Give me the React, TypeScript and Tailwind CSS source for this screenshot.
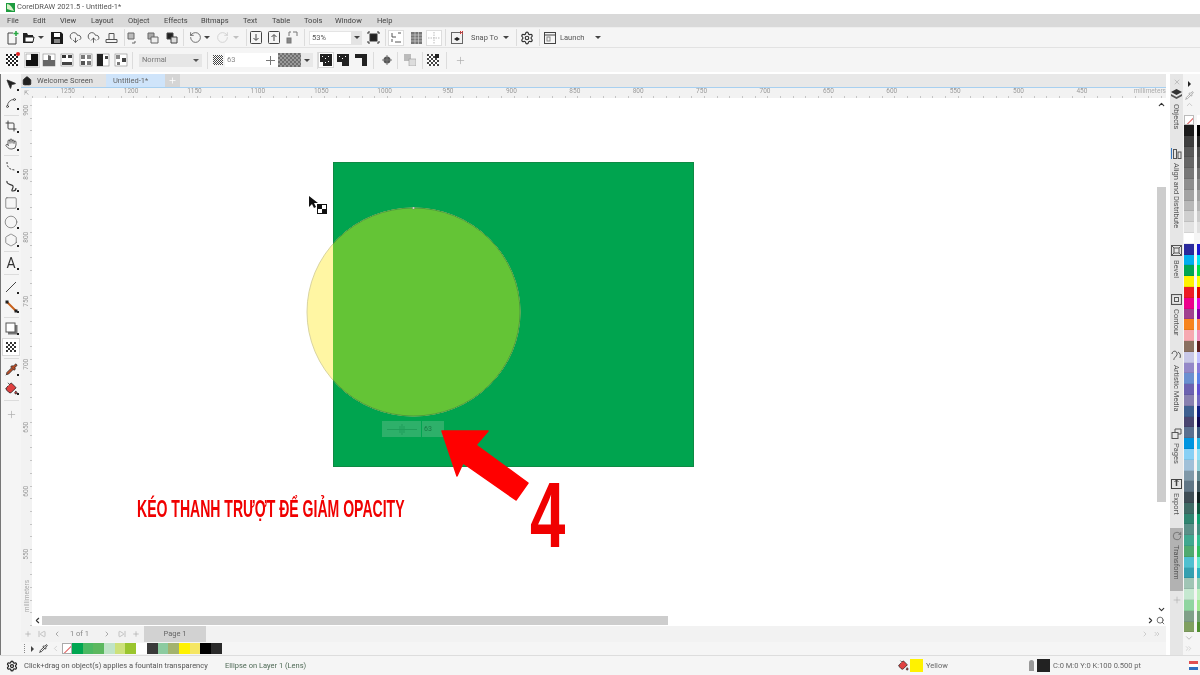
import {
  ChevronDown,
  ChevronLeft,
  ChevronRight,
  ChevronUp,
  ChevronsRight,
  CloudDownload,
  CloudUpload,
  Circle,
  Crop,
  Hand,
  Hexagon,
  House,
  MousePointer2,
  PaintBucket,
  Pipette,
  Plus,
  RotateCcw,
  RotateCw,
  Search,
  Settings,
  SkipBack,
  SkipForward,
  Spline,
  Square,
  X,
} from "lucide-react";
import type { ReactNode } from "react";

const menu = [
  { label: "File", cls: "w-[26px]" },
  { label: "Edit", cls: "w-[27px]" },
  { label: "View", cls: "w-[31px]" },
  { label: "Layout", cls: "w-[37px]" },
  { label: "Object", cls: "w-[36px]" },
  { label: "Effects", cls: "w-[37px]" },
  { label: "Bitmaps", cls: "w-[42px]" },
  { label: "Text", cls: "w-[29px]" },
  { label: "Table", cls: "w-[32px]" },
  { label: "Tools", cls: "w-[31px]" },
  { label: "Window", cls: "w-[42px]" },
  { label: "Help", cls: "w-[30px]" },
];

const hRuler = [1250, 1200, 1150, 1100, 1050, 1000, 950, 900, 850, 800, 750, 700, 650, 600, 550, 500, 450];
const vRuler = [900, 850, 800, 750, 700, 650, 600, 550];

const sideA = [
  "#1c1c1c", "#3f3f3f", "#595959", "#666666", "#777777", "#8e8e8e", "#a3a3a3", "#b8b8b8", "#cfcfcf", "#e3e3e3", "#ffffff",
  "#2a2a9c", "#00aeef", "#00a651", "#fff200", "#ed1c24", "#ec008c", "#a0408f", "#f7841e", "#f7a8b0", "#8a7060", "#c8c8e8",
  "#9488c8", "#6a8fd0", "#6c62b0", "#8880b0", "#3f6090", "#4a4570", "#5a7090", "#0095e0", "#88d0f5", "#a0c0d8", "#7f98a8",
  "#607585", "#3f4d55", "#3f6b65", "#2f8570", "#5a9088", "#40a88f", "#4faa6f", "#4fc0d0", "#35a0b0", "#a0c5b5", "#c5e8d0",
  "#90d5a0", "#80a088", "#80a060",
];
const sideB = [
  "#000000", "#262626", "#4a4a4a", "#555555", "#707070", "#888888", "#a0a0a0", "#b5b5b5", "#cccccc", "#e0e0e0", "#f5f5f5",
  "#1a1ad0", "#00e8f0", "#00e040", "#ffff00", "#e00000", "#e000e0", "#8000a0", "#ff8040", "#f090c0", "#602020", "#c0c0ff",
  "#8a7ad8", "#5a80e8", "#6050d0", "#7068c0", "#102080", "#100850", "#3a5a80", "#20b8e8", "#90e0f8", "#90d0d8", "#608890",
  "#405860", "#102020", "#105840", "#10a070", "#409080", "#30c090", "#30c060", "#60e8d0", "#30b0c0", "#90d0b0", "#c0f0c0",
  "#a0e890", "#70a070", "#509030",
];
const strip = ["#00a651", "#4cb963", "#5cb85f", "#c0e4c8", "#cde17a", "#9ac52e", "#ffffff", "#3a3a3a", "#8ccba0", "#a3b36e", "#fff200", "#f5e663", "#000000", "#2a2a2a"];

const dockerIcons: Record<string, ReactNode> = {
  Objects: (
    <svg width="11" height="11" viewBox="0 0 11 11">
      <path d="M5.500 0 11 3 5.500 6 0 3z" fill="#333" />
      <path d="M0 5l5.500 3L11 5v2L5.500 10 0 7z" fill="#555" />
    </svg>
  ),
  "Align and Distribute": (
    <svg width="11" height="11" viewBox="0 0 11 11" fill="none" stroke="#555">
      <path d="M0.500 0v11" stroke="#3a7ac0" />
      <rect x="2.500" y="1.500" width="3" height="9" />
      <rect x="7" y="4" width="3" height="6.500" />
    </svg>
  ),
  Bevel: (
    <svg width="11" height="11" viewBox="0 0 11 11" fill="none" stroke="#555">
      <rect x="0.500" y="0.500" width="10" height="10" />
      <rect x="3" y="3" width="5" height="5" />
      <path d="M0.500 0.500 3 3M10.500 0.500 8 3M0.500 10.500 3 8M10.500 10.500 8 8" />
    </svg>
  ),
  Contour: (
    <svg width="11" height="11" viewBox="0 0 11 11" fill="none" stroke="#555">
      <rect x="0.500" y="0.500" width="10" height="10" strokeWidth="1.200" />
      <rect x="3.500" y="3.500" width="4" height="4" />
    </svg>
  ),
  "Artistic Media": (
    <svg width="11" height="11" viewBox="0 0 11 11" fill="none" stroke="#555">
      <path d="M1 4c0-3 4-4 5-1s-4 5-3 7M7 2c2 1 3 3 2 6" />
    </svg>
  ),
  Pages: (
    <svg width="11" height="11" viewBox="0 0 11 11" fill="none" stroke="#555">
      <path d="M4 4V1h6v5H7" />
      <rect x="1" y="4.500" width="6" height="6" />
    </svg>
  ),
  Export: (
    <svg width="11" height="11" viewBox="0 0 11 11" fill="none" stroke="#444">
      <rect x="0.500" y="1.500" width="10" height="9" />
      <path d="M5.500 8V2" strokeWidth="1.500" />
      <path d="M3.500 4 5.500 2 7.500 4" />
    </svg>
  ),
};

const dockers = [
  { label: "Objects", cls: "h-[59px]" },
  { label: "Align and Distribute", cls: "h-[97px]" },
  { label: "Bevel", cls: "h-[49px]" },
  { label: "Contour", cls: "h-[56px]" },
  { label: "Artistic Media", cls: "h-[78px]" },
  { label: "Pages", cls: "h-[50px]" },
  { label: "Export", cls: "h-[50px]" },
];

function Sep({ cls = "" }: { cls?: string }) {
  return <div className={`w-px h-[17px] bg-[#dcdcdc] shrink-0 ${cls}`} />;
}

function HSep({ cls = "" }: { cls?: string }) {
  return <div className={`h-px w-[15px] bg-[#dcdcdc] mx-auto shrink-0 ${cls}`} />;
}

function Btn({ cls = "", children }: { cls?: string; children: ReactNode }) {
  return <div className={`w-4 h-4 flex items-center justify-center shrink-0 text-[#333] ${cls}`}>{children}</div>;
}

// toolbox buttons are taller and carry the small flyout mark in their corner
function Tool({ cls = "", flyout = true, children }: { cls?: string; flyout?: boolean; children: ReactNode }) {
  return (
    <div className={`relative w-[18px] h-[18px] ml-px flex items-center justify-center shrink-0 text-[#333] ${cls}`}>
      {children}
      {flyout && <div className="absolute right-[1px] bottom-[2px] w-[2px] h-[2px] bg-[#222]" />}
    </div>
  );
}

function Caret({ cls = "" }: { cls?: string }) {
  return (
    <div className={`w-2 flex justify-center shrink-0 ${cls}`}>
      <div className="w-0 h-0 border-x-[3px] border-x-transparent border-t-[3px] border-t-[#444]" />
    </div>
  );
}

function Checker({ size = 12, a = "#222", b = "#fff", cell = 2 }: { size?: number; a?: string; b?: string; cell?: number }) {
  const cells = [];
  const n = Math.floor(size / cell);
  for (let y = 0; y < n; y++) {
    for (let x = 0; x < n; x++) {
      if ((x + y) % 2 === 0) cells.push(<rect key={`${x}-${y}`} x={x * cell} y={y * cell} width={cell} height={cell} fill={a} />);
    }
  }
  return (
    <svg width={size} height={size} viewBox={`0 0 ${size} ${size}`}>
      <rect width={size} height={size} fill={b} />
      {cells}
    </svg>
  );
}

// the transparency type buttons share one shape: dark marks on a white square
function TypeIcon({ kind }: { kind: number }) {
  return (
    <svg width="14" height="14" viewBox="0 0 14 14">
      <rect x="1" y="1" width="12" height="12" fill="#fff" stroke="#888" strokeWidth="0.6" />
      {kind === 0 && <path d="M1 13V7h5V1h7v12z" fill="#111" />}
      {kind === 1 && <path d="M1 13V7h5V2l3 1v4h4v6z" fill="#666" />}
      {kind === 2 && (
        <>
          <rect x="2" y="2" width="4" height="3" fill="#333" />
          <rect x="8" y="2" width="4" height="3" fill="#444" />
          <rect x="2" y="9" width="10" height="3" fill="#444" />
        </>
      )}
      {kind === 3 && (
        <>
          <rect x="2" y="2" width="4" height="4" fill="#777" />
          <rect x="8" y="2" width="4" height="4" fill="#888" />
          <rect x="2" y="8" width="4" height="4" fill="#555" />
          <rect x="8" y="8" width="4" height="4" fill="#777" />
        </>
      )}
      {kind === 4 && (
        <>
          <rect x="1" y="1" width="6" height="12" fill="#222" />
          <rect x="9" y="3" width="3" height="3" fill="#444" />
        </>
      )}
      {kind === 5 && (
        <>
          <rect x="2" y="2" width="4" height="4" fill="#888" />
          <rect x="8" y="5" width="4" height="4" fill="#444" />
          <rect x="3" y="9" width="3" height="3" fill="#777" />
        </>
      )}
    </svg>
  );
}

function TopToolbar() {
  return (
    <div className="h-5 flex items-center pl-1 bg-[#f5f5f5] border-b border-[#e2e2e2] text-[#444] shrink-0">
      <Btn>
        <svg width="13" height="14" viewBox="0 0 13 14" fill="none" stroke="#444">
          <path d="M7 2H2v11h8V6" />
          <path d="M10 0v5M7.500 2.500h5" stroke="#2aa845" strokeWidth="1.600" />
        </svg>
      </Btn>
      <Btn>
        <svg width="13" height="12" viewBox="0 0 13 12">
          <path d="M1 1h4l1 2h5v8H1z" fill="#222" />
          <path d="M3 5h9l-1 5H3z" fill="#fff" stroke="#222" />
        </svg>
      </Btn>
      <Caret cls="ml-px" />
      <Btn cls="ml-1">
        <svg width="12" height="12" viewBox="0 0 12 12">
          <path d="M0 0h10l2 2v10H0z" fill="#1a1a1a" />
          <rect x="3" y="1" width="6" height="4" fill="#fff" />
          <rect x="3" y="7" width="6" height="4" fill="#888" />
        </svg>
      </Btn>
      <Btn cls="ml-0.5"><CloudDownload size={13} strokeWidth={1.400} /></Btn>
      <Btn cls="ml-0.5"><CloudUpload size={13} strokeWidth={1.400} /></Btn>
      <Btn cls="ml-0.5">
        <svg width="13" height="13" viewBox="0 0 13 13" fill="none" stroke="#555">
          <path d="M4 8V2.500h5V8M1 8.500h11v3H1z" />
        </svg>
      </Btn>
      <Sep cls="ml-[5px]" />
      <Btn>
        <svg width="12" height="12" viewBox="0 0 12 12" fill="none" stroke="#666">
          <path d="M1 1h6v6H1z" fill="#bbb" />
          <path d="M8 9v2H5" />
        </svg>
      </Btn>
      <Btn cls="ml-1">
        <svg width="12" height="12" viewBox="0 0 12 12" fill="none" stroke="#666">
          <path d="M1 1h6v6H1z" fill="#aaa" />
          <path d="M4 5h7v6H4z" fill="#eee" />
        </svg>
      </Btn>
      <Btn cls="ml-[3px]">
        <svg width="12" height="12" viewBox="0 0 12 12" stroke="#444">
          <path d="M1 1h6v6H1z" fill="#222" />
          <path d="M5 5h6v6H5z" fill="#ddd" />
        </svg>
      </Btn>
      <Sep cls="ml-[3px]" />
      <Btn cls="ml-[3px] text-[#555]"><RotateCcw size={13} strokeWidth={1.500} /></Btn>
      <Caret />
      <Btn cls="ml-[3px] text-[#ccc]"><RotateCw size={13} strokeWidth={1.500} /></Btn>
      <Caret cls="ml-0.5 opacity-30" />
      <Sep cls="ml-1.5" />
      <Btn cls="ml-px">
        <svg width="12" height="13" viewBox="0 0 12 13" fill="none" stroke="#444">
          <rect x="0.500" y="0.500" width="11" height="12" rx="1" />
          <path d="M6 3v6M3.500 7 6 9.500 8.500 7" />
        </svg>
      </Btn>
      <Btn cls="ml-0.5">
        <svg width="12" height="13" viewBox="0 0 12 13" fill="none" stroke="#444">
          <rect x="0.500" y="0.500" width="11" height="12" rx="1" />
          <path d="M6 10V4M3.500 6 6 3.500 8.500 6" />
        </svg>
      </Btn>
      <Btn cls="ml-0.5">
        <svg width="12" height="13" viewBox="0 0 12 13" fill="none" stroke="#777">
          <rect x="1" y="7" width="4" height="5" fill="#888" />
          <path d="M7 1h4v4M3 5V1h2" />
        </svg>
      </Btn>
      <Sep cls="ml-1" />
      <div className="ml-1 w-[43px] h-[14px] bg-white border border-[#e4e4e4] text-[7.5px] leading-[12px] pl-[2px] text-[#555] shrink-0">53%</div>
      <div className="w-2.5 h-[14px] bg-[#e4e4e4] flex items-center justify-center shrink-0">
        <div className="w-0 h-0 border-x-[3px] border-x-transparent border-t-[3px] border-t-[#444]" />
      </div>
      <Btn cls="ml-[3px]">
        <svg width="13" height="13" viewBox="0 0 13 13" fill="none" stroke="#333">
          <rect x="3" y="3" width="7" height="7" fill="#222" />
          <path d="M1 3V1h2M10 1h2v2M12 10v2h-2M3 12H1v-2" />
        </svg>
      </Btn>
      <Sep cls="ml-1" />
      <Btn cls="ml-0.5 border border-[#dddddd] bg-white">
        <svg width="11" height="11" viewBox="0 0 11 11" fill="none" stroke="#555">
          <path d="M1 1v4h4M10 1H7M1 10V7M4 10h6" />
        </svg>
      </Btn>
      <Btn cls="ml-1">
        <svg width="11" height="12" viewBox="0 0 11 12">
          <rect width="11" height="12" fill="#777" />
          <path d="M0 3h11M0 6h11M0 9h11M4 0v12M7.500 0v12" stroke="#ddd" strokeWidth="0.600" />
        </svg>
      </Btn>
      <Btn cls="ml-0.5 border border-[#dddddd] bg-white">
        <svg width="12" height="12" viewBox="0 0 12 12" fill="none" stroke="#bbb" strokeDasharray="1.500 1">
          <path d="M6 0v12M0 6h12" />
        </svg>
      </Btn>
      <Sep cls="ml-[3px]" />
      <Btn cls="ml-[3px]">
        <svg width="13" height="13" viewBox="0 0 13 13">
          <rect x="0.500" y="1.500" width="11" height="11" fill="#f2f2f2" stroke="#666" />
          <path d="M3 8l3-2 3 2-3 2z" fill="#222" />
          <path d="M9 0l3 3M12 0 9 3" stroke="#e03030" />
        </svg>
      </Btn>
      <span className="ml-1.5 w-[26px] text-[7.5px] text-[#555] shrink-0 whitespace-nowrap">Snap To</span>
      <Caret cls="ml-[5px]" />
      <Sep cls="ml-1.5" />
      <Btn cls="ml-0.5"><Settings size={14} strokeWidth={2} /></Btn>
      <Sep cls="ml-1" />
      <Btn cls="ml-0.5">
        <svg width="12" height="12" viewBox="0 0 12 12" fill="none" stroke="#444">
          <rect x="0.500" y="0.500" width="11" height="11" />
          <path d="M0 3h12" />
          <rect x="3" y="5" width="3" height="4" stroke="#888" />
        </svg>
      </Btn>
      <span className="ml-0.5 w-[25px] text-[7.5px] text-[#555] shrink-0">Launch</span>
      <Caret cls="ml-[9px]" />
    </div>
  );
}

function PropBar() {
  return (
    <div className="h-[26px] flex items-center pl-1 bg-[#f5f5f5] border-b-2 border-white text-[#444] shrink-0">
      <Btn>
        <div className="relative">
          <Checker size={12} cell={2} />
          <div className="absolute -top-0.5 -right-0.5 w-1 h-1 rounded-full bg-[#e02020]" />
        </div>
      </Btn>
      <Btn cls="ml-1 border border-[#d8d8d8] bg-white"><TypeIcon kind={0} /></Btn>
      <Btn cls="ml-px"><TypeIcon kind={1} /></Btn>
      <Btn cls="ml-0.5"><TypeIcon kind={2} /></Btn>
      <Btn cls="ml-[3px]"><TypeIcon kind={3} /></Btn>
      <Btn cls="ml-px"><TypeIcon kind={4} /></Btn>
      <Btn cls="ml-0.5"><TypeIcon kind={5} /></Btn>
      <Sep cls="ml-[3px]" />
      <div className="ml-1.5 w-[63px] h-[13px] bg-[#e6e6e6] flex items-center justify-between px-[3px] text-[7.5px] text-[#777] shrink-0">
        Normal
        <div className="w-0 h-0 border-x-[3px] border-x-transparent border-t-[3px] border-t-[#555]" />
      </div>
      <Sep cls="ml-[5px]" />
      <div className="ml-[3px] w-3.5 flex justify-center shrink-0">
        <Checker size={10} a="#444" cell={1} />
      </div>
      <div className="w-[38px] h-[14px] bg-white text-[7.5px] leading-[14px] pl-[2px] text-[#888] shrink-0">63</div>
      <div className="w-[15px] h-[14px] bg-white flex items-center justify-center shrink-0">
        <svg width="9" height="11" viewBox="0 0 9 11" stroke="#777">
          <path d="M0 5.500h9M4.500 1v9" />
        </svg>
      </div>
      <div className="w-[23px] h-[14px] shrink-0 overflow-hidden bg-[#888]">
        <Checker size={24} a="#6e6e6e" b="#9a9a9a" cell={2} />
      </div>
      <div className="w-3 h-[14px] bg-[#e8e8e8] flex items-center justify-center shrink-0">
        <div className="w-0 h-0 border-x-[3px] border-x-transparent border-t-[3px] border-t-[#444]" />
      </div>
      <Sep cls="ml-1" />
      <Btn cls="border border-[#d8d8d8] bg-white">
        <svg width="12" height="12" viewBox="0 0 12 12">
          <path d="M0 0h12v12H3V8H0z" fill="#222" />
          <path d="M2 2h1v1H2zM5 4h1v1H5zM8 2h1v1H8zM5 8h1v1H5zM8 7h1v1H8z" fill="#fff" />
        </svg>
      </Btn>
      <Btn cls="ml-px">
        <svg width="12" height="12" viewBox="0 0 12 12">
          <path d="M0 0h12v12H5V8H0z" fill="#222" />
          <path d="M2 2h1v1H2zM5 4h1v1H5zM8 2h1v1H8z" fill="#fff" />
        </svg>
      </Btn>
      <Btn cls="ml-0.5">
        <svg width="12" height="12" viewBox="0 0 12 12">
          <path d="M0 0h12v12H7V4H0z" fill="#222" />
        </svg>
      </Btn>
      <Sep cls="ml-1" />
      <Btn cls="ml-[5px]">
        <svg width="10" height="10" viewBox="0 0 10 10">
          <circle cx="5" cy="5" r="3.500" fill="#555" />
          <path d="M5 0v10M0 5h10" stroke="#777" />
        </svg>
      </Btn>
      <Sep cls="ml-0.5" />
      <Btn cls="ml-1">
        <svg width="12" height="12" viewBox="0 0 12 12">
          <rect x="0" y="0" width="7" height="7" fill="#bbb" />
          <rect x="5" y="5" width="7" height="7" fill="#ddd" stroke="#999" strokeWidth="0.600" />
        </svg>
      </Btn>
      <Sep cls="ml-1" />
      <Btn cls="ml-0.5">
        <div className="relative">
          <Checker size={12} a="#444" cell={2} />
          <div className="absolute top-0 right-0 w-1 h-1 bg-[#222]" />
        </div>
      </Btn>
      <Sep cls="ml-[5px]" />
      <Btn cls="ml-[5px] text-[#aaa]"><Plus size={11} strokeWidth={1.500} /></Btn>
    </div>
  );
}

function Toolbox() {
  return (
    <div className="w-[21px] shrink-0 bg-[#f5f5f5] border-l border-[#777] flex flex-col pt-px text-[#333]">
      <Tool><MousePointer2 size={12} fill="#222" strokeWidth={1.500} /></Tool>
      <Tool cls="mt-px"><Spline size={12} strokeWidth={1.500} /></Tool>
      <HSep cls="mt-[3px]" />
      <Tool cls="mt-px"><Crop size={12} strokeWidth={1.800} /></Tool>
      <Tool><Hand size={12} strokeWidth={1.500} /></Tool>
      <HSep cls="mt-0.5" />
      <Tool cls="mt-px">
        <svg width="13" height="13" viewBox="0 0 13 13" fill="none" stroke="#444">
          <path d="M2 2c0 4 1 8 9 8" strokeDasharray="2 1.500" />
        </svg>
      </Tool>
      <Tool cls="mt-px">
        <svg width="13" height="13" viewBox="0 0 13 13" fill="none" stroke="#333" strokeWidth="1.200">
          <path d="M2 2c-1 4 5 3 6 5s-3 5 0 5 3-2 3-3" />
        </svg>
      </Tool>
      <Tool cls="text-[#666]"><Square size={14} strokeWidth={1.200} /></Tool>
      <Tool cls="mt-px text-[#666]"><Circle size={14} strokeWidth={1.200} /></Tool>
      <Tool cls="text-[#666]"><Hexagon size={14} strokeWidth={1.200} /></Tool>
      <HSep cls="mt-0.5" />
      <Tool cls="mt-0.5"><span className="text-[14px] leading-none text-[#333]">A</span></Tool>
      <HSep cls="mt-0.5" />
      <Tool cls="mt-[3px]">
        <svg width="12" height="12" viewBox="0 0 12 12" stroke="#444">
          <path d="M1 11 11 1" />
        </svg>
      </Tool>
      <Tool cls="mt-px">
        <svg width="13" height="13" viewBox="0 0 13 13">
          <path d="M2 2l9 9" stroke="#c8601a" strokeWidth="2" />
          <rect x="0.500" y="0.500" width="3" height="3" fill="#222" />
          <rect x="9.500" y="9.500" width="3" height="3" fill="#222" />
        </svg>
      </Tool>
      <HSep cls="mt-0.5" />
      <Tool cls="mt-px">
        <svg width="13" height="13" viewBox="0 0 13 13">
          <rect x="3" y="3" width="9.500" height="9.500" fill="#777" />
          <rect x="1" y="1" width="9" height="9" fill="#fff" stroke="#555" />
        </svg>
      </Tool>
      <Tool flyout={false} cls="mt-px border border-[#d8d8d8] bg-white"><Checker size={11} a="#333" cell={2} /></Tool>
      <HSep cls="mt-0.5" />
      <Tool cls="mt-px"><Pipette size={13} fill="#c04a20" strokeWidth={1.500} /></Tool>
      <Tool cls="mt-px"><PaintBucket size={13} stroke="#222" fill="#e04040" strokeWidth={1.500} /></Tool>
      <HSep cls="mt-[3px]" />
      <Tool flyout={false} cls="mt-1 text-[#aaa]"><Plus size={11} strokeWidth={1.500} /></Tool>
    </div>
  );
}

function Drawing() {
  return (
    <div className="flex-1 relative bg-white overflow-hidden">
      {/* green rectangle */}
      <div className="absolute left-[301px] top-[64px] w-[361px] h-[305px] bg-[#00a44f] border border-[#0e8a44]" />
      {/* lens ellipse, green where it overlaps the rectangle */}
      <svg className="absolute left-[274px] top-[109px]" width="216" height="210" viewBox="0 0 216 210">
        <defs>
          <clipPath id="overlap">
            <rect x="27" y="0" width="190" height="210" />
          </clipPath>
        </defs>
        <ellipse cx="107.500" cy="105" rx="106.500" ry="104" fill="#fff6a3" stroke="#d9d4a0" />
        <ellipse cx="107.500" cy="105" rx="106.500" ry="104" fill="#64c436" stroke="#4a9a38" clipPath="url(#overlap)" />
        <circle cx="107.500" cy="1" r="1" fill="#fff" stroke="#777" strokeWidth="0.500" />
      </svg>
      {/* on-canvas transparency slider */}
      <div className="absolute left-[350px] top-[323px] h-4 flex">
        <div className="w-[39px] bg-[#2eb06a] flex items-center justify-center">
          <svg width="30" height="11" viewBox="0 0 30 11" stroke="#1f9d5a">
            <path d="M0 5.500h30" />
            <path d="M15 0v11M13 2v7M17 2v7" />
          </svg>
        </div>
        <div className="ml-px w-[22px] bg-[#2eb06a] text-[7px] leading-[16px] pl-[2px] text-[#177a45]">63</div>
      </div>
      {/* tool cursor */}
      <svg className="absolute left-[277px] top-[98px]" width="10" height="14" viewBox="0 0 10 14">
        <path d="M0 0v11l3-3 2 4 2-1-2-4h4z" fill="#111" />
      </svg>
      <div className="absolute left-[285px] top-[106px] w-2.5 h-2.5 border border-[#111]">
        <Checker size={8} a="#111" cell={4} />
      </div>
      {/* red annotation arrow */}
      <svg className="absolute left-[409px] top-[332px]" width="90" height="72" viewBox="0 0 90 72">
        <path d="M1 1 47 1 35 15 87 53 75 70 22 33 16 46z" fill="#ff0000" stroke="#ff0000" strokeLinejoin="round" strokeWidth="1.500" />
      </svg>
      <div className="absolute left-[105px] top-[396px] origin-left scale-x-[0.585] whitespace-nowrap font-['Liberation_Sans',sans-serif] font-bold text-[24px] leading-[30px] text-[#f00000]">
        KÉO THANH TRƯỢT ĐỂ GIẢM OPACITY
      </div>
      <div className="absolute left-[498px] top-[367px] origin-left scale-x-[0.69] font-['Liberation_Sans',sans-serif] font-bold text-[92px] leading-[100px] text-[#f00000]">
        4
      </div>
    </div>
  );
}

function Center() {
  return (
    <div className="flex-1 min-w-0 flex flex-col">
      {/* document tabs */}
      <div className="h-[13px] flex bg-[#e8e8e8] text-[7.5px] leading-[13px] text-[#555] shrink-0">
        <div className="w-[85px] flex items-center gap-[5px] pl-px bg-[#e3e3e3]">
          <House size={10} fill="#222" stroke="#222" />
          Welcome Screen
        </div>
        <div className="w-[59px] pl-[7px] bg-[#cfe4fa] text-[#666]">Untitled-1*</div>
        <div className="w-[15px] bg-[#d5d5d5] flex items-center justify-center text-white">
          <Plus size={9} strokeWidth={2} />
        </div>
      </div>
      {/* horizontal ruler */}
      <div className="h-[11px] flex border-t border-[#a8d0f0] bg-[#f2f2f2] shrink-0">
        <div className="w-[11px] shrink-0 text-[6px] leading-[9px] text-[#888] text-center">⇱</div>
        <div className="flex-1 relative pl-1 flex text-[6.5px] leading-[7px] text-[#999]">
          {hRuler.map((n) => (
            <div key={n} className="w-[63.4px] shrink-0 text-center">{n}</div>
          ))}
          <span className="ml-[20px] text-[#aaa]">millimeters</span>
          <div className="absolute left-0 right-0 bottom-0 h-[2px] bg-[repeating-linear-gradient(90deg,#c4c4c4_0,#c4c4c4_1px,transparent_1px,transparent_12.68px)]" />
        </div>
      </div>
      <div className="flex-1 min-h-0 flex">
        {/* vertical ruler */}
        <div className="w-[11px] shrink-0 bg-[#f2f2f2] relative flex flex-col">
          {vRuler.map((n) => (
            <div key={n} className="h-[63.4px] shrink-0 flex items-center justify-center first:mt-[-19px]">
              <span className="-rotate-90 text-[6.5px] leading-none text-[#999]">{n}</span>
            </div>
          ))}
          <div className="mt-[5px] -rotate-90 text-[6.5px] leading-none text-[#aaa] whitespace-nowrap origin-center ml-[-12px] w-[36px]">millimeters</div>
          <div className="absolute top-0 bottom-0 right-0 w-[2px] bg-[repeating-linear-gradient(0deg,#c4c4c4_0,#c4c4c4_1px,transparent_1px,transparent_12.68px)]" />
        </div>
        <div className="flex-1 min-w-0 flex flex-col">
          <div className="flex-1 min-h-0 flex">
            <Drawing />
            <div className="w-[9px] shrink-0 bg-white flex flex-col items-center">
              <div className="h-[89px] shrink-0 text-[#333] pt-[2px]"><ChevronUp size={9} strokeWidth={3} /></div>
              <div className="w-[9px] h-[315px] bg-[#cdcdcd] shrink-0" />
              <div className="mt-auto mb-px text-[#333]"><ChevronDown size={9} strokeWidth={3} /></div>
            </div>
          </div>
          <div className="h-[11px] flex items-center shrink-0 bg-white">
            <div className="w-2.5 text-[#333] flex justify-center"><ChevronLeft size={9} strokeWidth={3} /></div>
            <div className="w-[626px] h-[9px] bg-[#cdcdcd]" />
            <div className="ml-auto mr-px text-[#333]"><ChevronRight size={9} strokeWidth={3} /></div>
            <div className="mr-px text-[#444]"><Search size={9} strokeWidth={2} /></div>
          </div>
        </div>
      </div>
      {/* page navigator */}
      <div className="h-4 flex items-center bg-[#f2f2f2] shrink-0 text-[#aaa] text-[7.5px] pl-[2px]">
        <div className="w-2.5 ml-px"><Plus size={8} strokeWidth={2} /></div>
        <div className="w-3 ml-[4px]"><SkipBack size={8} strokeWidth={2} /></div>
        <div className="w-3 ml-[3px]"><ChevronLeft size={8} strokeWidth={3} /></div>
        <span className="w-[23px] ml-[5px] text-[#888] whitespace-nowrap">1 of 1</span>
        <div className="w-3 ml-2.5"><ChevronRight size={8} strokeWidth={3} /></div>
        <div className="w-3 ml-[3px]"><SkipForward size={8} strokeWidth={2} /></div>
        <div className="w-2.5 ml-[2px]"><Plus size={8} strokeWidth={2} /></div>
        <div className="ml-[2px] w-[62px] h-4 bg-[#d2d2d2] text-center leading-4 text-[#666]">Page 1</div>
        <div className="ml-auto mr-1 text-[#bbb]"><ChevronRight size={8} strokeWidth={2} /></div>
        <div className="mr-[5px] text-[#bbb]"><ChevronsRight size={8} strokeWidth={2} /></div>
      </div>
      {/* document palette */}
      <div className="h-[13px] flex items-center bg-[#f5f5f5] shrink-0 pl-[3px]">
        <div className="w-[2px] h-[9px] border-l border-dotted border-[#888]" />
        <div className="ml-[5px] w-0 h-0 border-y-[3px] border-y-transparent border-l-[3px] border-l-[#444]" />
        <div className="ml-[5px] text-[#111]"><Pipette size={9} strokeWidth={2} /></div>
        <div className="ml-[3px] text-[#bbb]"><ChevronLeft size={9} strokeWidth={1.500} /></div>
        <div className="ml-[2px] w-[10px] h-[11px] bg-white border border-[#aaa] relative overflow-hidden shrink-0">
          <div className="absolute left-[-2px] top-[4px] w-4 h-px bg-[#e06060] -rotate-45" />
        </div>
        {strip.map((c, i) => (
          <div key={i} className="w-[10.7px] h-[11px] shrink-0" style={{ backgroundColor: c }} />
        ))}
      </div>
    </div>
  );
}

function Docker() {
  return (
    <div className="w-[13px] shrink-0 ml-1 bg-[#e6e6e6] flex flex-col items-center text-[#555] text-[7.5px]">
      <div className="h-[15px] shrink-0 flex items-center text-[#aaa]"><X size={8} strokeWidth={2} /></div>
      {dockers.map((d) => (
        <div key={d.label} className={`${d.cls} shrink-0 flex flex-col items-center`}>
          {dockerIcons[d.label]}
          <span className="mt-[4px] [writing-mode:vertical-rl] whitespace-nowrap leading-none">{d.label}</span>
        </div>
      ))}
      <div className="h-[63px] w-full shrink-0 bg-[#b2b2b2] flex flex-col items-center pt-[3px]">
        <RotateCw size={10} strokeWidth={1.500} className="shrink-0" />
        <span className="mt-[4px] [writing-mode:vertical-rl] whitespace-nowrap leading-none">Transform</span>
      </div>
      <div className="mt-[4px] text-[#aaa]"><Plus size={10} strokeWidth={1.500} /></div>
    </div>
  );
}

function SidePalette() {
  return (
    <div className="w-[17px] shrink-0 flex flex-col bg-[#f5f5f5] pl-px">
      <div className="h-[41px] shrink-0 w-[11px] flex flex-col items-center text-[#333]">
        <div className="mt-[7px] w-0 h-0 border-y-[3px] border-y-transparent border-l-[3px] border-l-[#222]" />
        <div className="mt-[4px] text-[#999]"><Pipette size={9} strokeWidth={2} /></div>
        <div className="text-[#bbb]"><ChevronUp size={9} strokeWidth={2} /></div>
      </div>
      <div className="flex gap-[3px]">
        <div className="w-[10px] shrink-0">
          <div className="h-[10px] bg-white border border-[#bbb] relative overflow-hidden">
            <div className="absolute left-[-2px] top-[4px] w-4 h-px bg-[#e06060] -rotate-45" />
          </div>
          {sideA.map((c, i) => (
            <div key={i} className="h-[10.8px] border-b border-[#00000012]" style={{ backgroundColor: c }} />
          ))}
        </div>
        <div className="w-[3px] shrink-0">
          <div className="h-[10px] bg-white" />
          {sideB.map((c, i) => (
            <div key={i} className="h-[10.8px]" style={{ backgroundColor: c }} />
          ))}
        </div>
      </div>
      <div className="w-[10px] mt-px text-[#999]"><ChevronDown size={10} strokeWidth={1.500} /></div>
      <div className="w-[10px] mt-px text-[#bbb]"><ChevronsRight size={9} strokeWidth={1.500} /></div>
    </div>
  );
}

export default function App() {
  return (
    <div className="w-[1200px] h-[675px] flex flex-col overflow-hidden bg-white font-['Roboto',sans-serif] blur-[0.35px]">
      <div className="h-[14px] flex items-center pl-[6px] gap-[2px] text-[7.5px] text-[#555] shrink-0">
        <svg width="9" height="9" viewBox="0 0 9 9">
          <rect width="9" height="9" fill="#1d9c3f" />
          <path d="M1 1c3 0 5 3 7 7-3-1-5-1-7-2z" fill="#d8f0c8" />
        </svg>
        CorelDRAW 2021.5 - Untitled-1*
      </div>
      <div className="h-[14px] flex items-center pl-[2px] bg-[#d9d9d9] border-b border-[#eeeeee] text-[7.5px] text-[#444] shrink-0">
        {menu.map((m) => (
          <div key={m.label} className={`${m.cls} pl-[5px] shrink-0`}>{m.label}</div>
        ))}
      </div>
      <TopToolbar />
      <PropBar />
      <div className="flex-1 min-h-0 flex">
        <Toolbox />
        <Center />
        <Docker />
        <SidePalette />
      </div>
      {/* status bar */}
      <div className="h-5 flex items-center bg-[#f5f5f5] border-t border-[#dddddd] text-[7.5px] text-[#555] shrink-0 pl-[6px]">
        <Settings size={12} strokeWidth={2.500} className="text-[#222] shrink-0" />
        <span className="ml-[6px] w-[201px] shrink-0 whitespace-nowrap">Click+drag on object(s) applies a fountain transparency</span>
        <span className="w-[130px] shrink-0 whitespace-nowrap text-[#4f6a56]">Ellipse on Layer 1 (Lens)</span>
        <div className="ml-[543px] shrink-0 text-[#222]"><PaintBucket size={11} fill="#e04040" strokeWidth={1.500} /></div>
        <div className="ml-px w-[13px] h-[13px] bg-[#fff200] shrink-0" />
        <span className="ml-[3px] w-[28px] shrink-0 text-[#666]">Yellow</span>
        <div className="ml-[75px] w-[5px] h-[11px] shrink-0 bg-[#999] rounded-t-full" />
        <div className="ml-[3px] w-[13px] h-[13px] bg-[#222] shrink-0" />
        <span className="ml-[3px] shrink-0 whitespace-nowrap text-[#666]">C:0 M:0 Y:0 K:100 0.500 pt</span>
        <svg className="ml-auto mr-[2px]" width="9" height="9" viewBox="0 0 9 9">
          <rect width="9" height="3" fill="#e05050" />
          <rect y="3" width="9" height="3" fill="#fff" />
          <rect y="6" width="9" height="3" fill="#3070c0" />
        </svg>
      </div>
    </div>
  );
}
